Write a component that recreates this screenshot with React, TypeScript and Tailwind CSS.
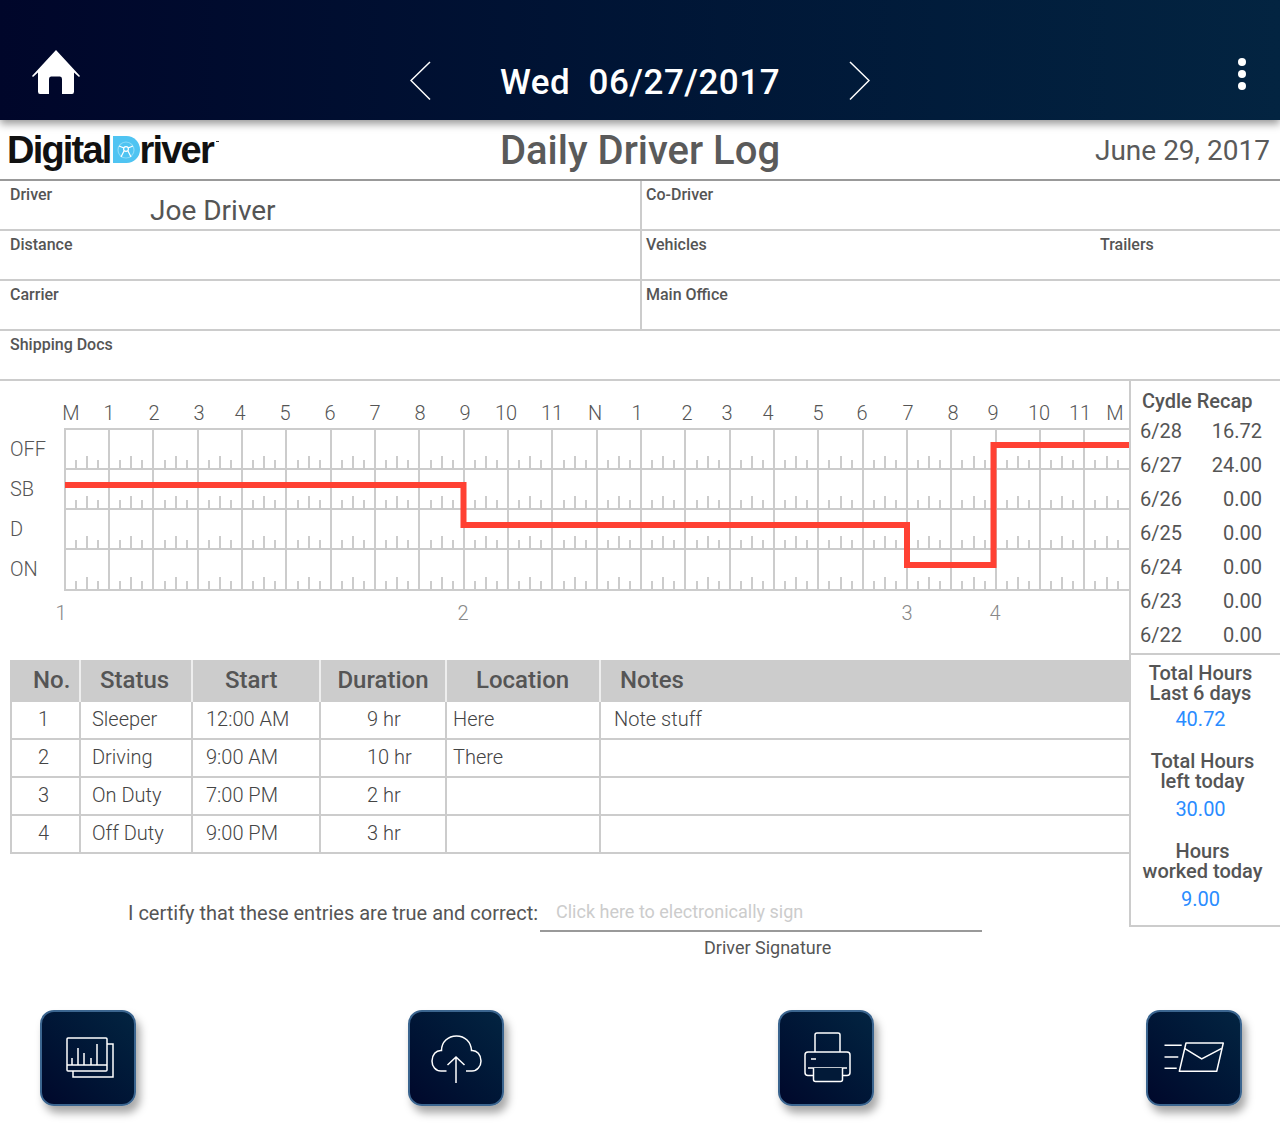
const hourLabels: [string, number][] = [
  ["M", 71], ["1", 109], ["2", 154], ["3", 199], ["4", 240], ["5", 285], ["6", 330], ["7", 375],
  ["8", 420], ["9", 465], ["10", 506], ["11", 552], ["N", 595], ["1", 637], ["2", 687], ["3", 727],
  ["4", 768], ["5", 818], ["6", 862], ["7", 908], ["8", 953], ["9", 993], ["10", 1039], ["11", 1080], ["M", 1115],
];
const statusLabels: [string, number][] = [["OFF", 76], ["SB", 116], ["D", 156], ["ON", 196]];
const rowBottoms = [89, 129, 169, 210];
const changeNumbers: [string, number][] = [["1", 61], ["2", 463], ["3", 907], ["4", 995]];

const recap = [
  ["6/28", "16.72"], ["6/27", "24.00"], ["6/26", "0.00"], ["6/25", "0.00"],
  ["6/24", "0.00"], ["6/23", "0.00"], ["6/22", "0.00"],
];

const logRows = [
  ["1", "Sleeper", "12:00 AM", "9 hr", "Here", "Note stuff"],
  ["2", "Driving", "9:00 AM", "10 hr", "There", ""],
  ["3", "On Duty", "7:00 PM", "2 hr", "", ""],
  ["4", "Off Duty", "9:00 PM", "3 hr", "", ""],
];

const headerCells = [
  ["No.", "w-[71px] pl-[23px]"],
  ["Status", "w-[112px] pl-[19px]"],
  ["Start", "w-[128px] pl-[32px]"],
  ["Duration", "w-[126px] justify-center"],
  ["Location", "w-[154px] pl-[29px]"],
  ["Notes", "flex-1 pl-[19px]"],
];

const bodyCells = [
  "w-[71px] justify-center pr-[4px] border-l-2",
  "w-[112px] pl-[11px]",
  "w-[128px] pl-[13px]",
  "w-[126px] pl-[46px]",
  "w-[154px] pl-[6px]",
  "flex-1 pl-[13px]",
];

const LogGraph = () => {
  const cell = 44.33;
  const left = 64.8;
  return (
    <svg width="1130" height="280" className="block -mt-px overflow-visible">
      {hourLabels.map(([label, x], i) => (
        <text key={i} x={x} y="40" textAnchor="middle" className="text-[20px] font-light fill-[#555]">{label}</text>
      ))}
      {statusLabels.map(([label, y]) => (
        <text key={label} x="10" y={y} className="text-[20px] font-light fill-[#555]">{label}</text>
      ))}
      {changeNumbers.map(([label, x]) => (
        <text key={label} x={x} y="240" textAnchor="middle" className="text-[20px] font-light fill-[#888]">{label}</text>
      ))}
      <line x1="64" y1="49" x2="1130" y2="49" stroke="#ccc" strokeWidth="2" />
      {rowBottoms.map((y) => (
        <line key={y} x1="64" y1={y} x2="1130" y2={y} stroke="#ccc" strokeWidth="2" />
      ))}
      {Array.from({ length: 24 }, (_, i) => {
        const x = Math.round(left + i * cell);
        return <line key={i} x1={x} y1="49" x2={x} y2="211" stroke="#ccc" strokeWidth="2" />;
      })}
      {rowBottoms.map((y) =>
        Array.from({ length: 24 }, (_, i) => {
          const x = left + i * cell;
          const q1 = Math.round(x + cell / 4);
          const q2 = Math.round(x + cell / 2);
          const q3 = Math.round(x + (cell * 3) / 4);
          return (
            <g key={i} stroke="#ccc" strokeWidth="2">
              <line x1={q1} y1={y - 9} x2={q1} y2={y} />
              <line x1={q2} y1={y - 13} x2={q2} y2={y} />
              <line x1={q3} y1={y - 9} x2={q3} y2={y} />
            </g>
          );
        })
      )}
      <path d="M65 105H463.500V145H907V185H993.500V65H1130" fill="none" stroke="#ff4133" strokeWidth="6" />
    </svg>
  );
};

const Logo = () => (
  <div className="flex items-start pl-[7px] pt-[10px] font-['Liberation_Sans',sans-serif] font-bold text-[38px] leading-[40px] tracking-[-1.8px] text-[#111]">
    <span>Digital</span>
    <div className="ml-[2px] mt-[6px] w-[27px] h-[27px] bg-[#4fc4f2] rounded-r-full flex items-center justify-center">
      <svg width="22" height="22" viewBox="0 0 22 22" fill="none" stroke="#fff" strokeWidth="1.2">
        <circle cx="11" cy="11" r="8" stroke="#8adaf7" />
        <circle cx="11" cy="10" r="2.4" />
        <path d="M4 7l5 2M18 7l-5 2M9 12l-3 6M13 12l3 6" />
      </svg>
    </div>
    <span>river</span>
    <span className="w-[3px] h-px bg-[#333] ml-[3px] mt-[11px]" />
  </div>
);

const ToolButton = ({ className, children }: { className: string; children: React.ReactNode }) => (
  <button className={`w-[96px] h-[96px] rounded-[14px] border-[2px] border-[#3b658f] bg-gradient-to-tr from-[#00082b] to-[#032441] flex items-center justify-center shadow-[4px_7px_8px_rgba(0,0,0,0.35)] ${className}`}>
    {children}
  </button>
);

const iconProps = {
  width: 60,
  height: 60,
  viewBox: "0 0 60 60",
  fill: "none",
  stroke: "#fff",
  strokeWidth: 1.5,
};

export default function App() {
  return (
    <div className="w-[1280px] h-[1124px] overflow-hidden bg-white font-['Roboto',sans-serif] text-[#555]">
      <header className="relative z-10 h-[120px] bg-gradient-to-r from-[#00062a] to-[#032441] shadow-[0_4px_8px_rgba(0,0,0,0.4)] flex items-center justify-center pt-[42px] text-white">
        <svg className="absolute left-[32px] top-[50px]" width="48" height="44" viewBox="0 0 48 44" fill="#fff">
          <path fillRule="evenodd" d="M24 0L48 26L47 27L42 22.500V41.500Q42 44 40 44H8Q6 44 6 41.500V22.500L1 27L0 26ZM17 44H30V29Q30 26.500 28 26.500H19Q17 26.500 17 29Z" />
        </svg>
        <svg width="21" height="40" viewBox="0 0 21 40" fill="none" stroke="#fff" strokeWidth="1.5">
          <path d="M20 1L1 19.500L20 38.500" />
        </svg>
        <div className="w-[418px] text-center text-[35px] leading-[42px] pt-[4px] font-medium tracking-[0.5px] whitespace-pre">Wed  06/27/2017</div>
        <svg width="21" height="40" viewBox="0 0 21 40" fill="none" stroke="#fff" strokeWidth="1.5">
          <path d="M1 1L20 19.500L1 38.500" />
        </svg>
        <div className="absolute left-[1238px] top-[58px] flex flex-col gap-[4px]">
          <span className="w-[8px] h-[8px] rounded-full bg-white" />
          <span className="w-[8px] h-[8px] rounded-full bg-white" />
          <span className="w-[8px] h-[8px] rounded-full bg-white" />
        </div>
      </header>

      <div className="grid grid-cols-[1fr_auto_1fr] h-[61px] border-b-2 border-[#999]">
        <Logo />
        <div className="text-[40px] leading-[60px] pt-px font-medium text-[#5a5a5a]">Daily Driver Log</div>
        <div className="text-right pr-[10px] pt-px text-[28px] leading-[60px] text-[#5a5a5a]">June 29, 2017</div>
      </div>

      <div className="text-[16px] leading-[18px] font-medium">
        <div className="flex h-[50px] border-b-2 border-[#ccc]">
          <div className="w-[642px] border-r-2 border-[#ccc] pl-[10px] pt-[5px] relative">
            Driver
            <div className="absolute left-[150px] top-[13px] text-[28px] leading-[34px] font-normal">Joe Driver</div>
          </div>
          <div className="flex-1 pl-[4px] pt-[5px]">Co-Driver</div>
        </div>
        <div className="flex h-[50px] border-b-2 border-[#ccc]">
          <div className="w-[642px] border-r-2 border-[#ccc] pl-[10px] pt-[5px]">Distance</div>
          <div className="w-[458px] pl-[4px] pt-[5px]">Vehicles</div>
          <div className="flex-1 pt-[5px]">Trailers</div>
        </div>
        <div className="flex h-[50px] border-b-2 border-[#ccc]">
          <div className="w-[642px] border-r-2 border-[#ccc] pl-[10px] pt-[5px]">Carrier</div>
          <div className="flex-1 pl-[4px] pt-[5px]">Main Office</div>
        </div>
        <div className="h-[50px] border-b-2 border-[#ccc] pl-[10px] pt-[5px]">Shipping Docs</div>
      </div>

      <div className="flex items-start">
        <div className="w-[1129px] shrink-0">
          <LogGraph />
          <div className="ml-[10px] text-[20px] text-[#444] font-light">
            <div className="flex h-[42px] bg-[#ccc] text-[24px] font-medium text-[#555]">
              {headerCells.map(([label, cls]) => (
                <div key={label} className={`flex items-center pb-[2px] border-r-2 border-[#eee] last:border-r-0 ${cls}`}>{label}</div>
              ))}
            </div>
            {logRows.map((row) => (
              <div key={row[0]} className="flex h-[38px] border-b-2 border-[#ccc]">
                {row.map((text, i) => (
                  <div key={i} className={`flex items-center pb-[2px] border-r-2 border-[#ccc] last:border-r-0 ${bodyCells[i]}`}>{text}</div>
                ))}
              </div>
            ))}
          </div>
          <div className="mt-[45px] flex items-start">
            <div className="ml-[128px] w-[412px] text-[20px] leading-[24px] pt-[2px]">I certify that these entries are true and correct:</div>
            <div className="w-[442px]">
              <div className="h-[33px] border-b-2 border-[#999] pl-[16px] text-[18px] leading-[26px] text-[#ccc]">Click here to electronically sign</div>
              <div className="pl-[164px] pt-[5px] text-[18px] leading-[22px]">Driver Signature</div>
            </div>
          </div>
        </div>

        <aside className="flex-1 h-[546px] border-l-2 border-b-2 border-[#ccc] text-[20px]">
          <div className="h-[274px] border-b-2 border-[#ccc] pl-[9px]">
            <div className="pt-[8px] pl-[2px] font-medium leading-[24px] h-[33px]">Cydle Recap</div>
            {recap.map(([day, hours]) => (
              <div key={day} className="flex justify-between h-[34px] leading-[34px] w-[122px] font-normal">
                <span>{day}</span>
                <span>{hours}</span>
              </div>
            ))}
          </div>
          <div className="text-center font-medium leading-[20px] pt-[8px] pr-[10px]">
            <div>Total Hours<br />Last 6 days</div>
            <div className="text-[#2a8cff] font-normal pt-[3px] leading-[26px] h-[48px]">40.72</div>
            <div className="pl-[4px]">Total Hours<br />left today</div>
            <div className="text-[#2a8cff] font-normal pt-[5px] leading-[26px] h-[50px]">30.00</div>
            <div className="pl-[4px]">Hours<br />worked today</div>
            <div className="text-[#2a8cff] font-normal pt-[5px] leading-[26px]">9.00</div>
          </div>
        </aside>
      </div>

      <div className="mt-[51px] pl-[40px] flex">
        <ToolButton className="">
          <svg {...iconProps}>
            <path d="M15 43V49H55V16H49" />
            <rect x="9" y="10" width="40" height="33" rx="1" />
            <path d="M9 37H49M14 37V30M20 37V20M26 37V25M33 37V30M39 37V16" />
          </svg>
        </ToolButton>
        <ToolButton className="ml-[272px]">
          <svg {...iconProps}>
            <path d="M20.500 43H15C9.500 43 6 38.500 6 33C6 27 10 22 15.500 22.500C15.500 14 22 8 30.500 8C39 8 45 14 45.500 22.500C51 22 55 27 55 33C55 38.500 51 43 46 43H40" />
            <path d="M30 55V29M21.500 37L30 29L38.500 37" />
          </svg>
        </ToolButton>
        <ToolButton className="ml-[274px]">
          <svg {...iconProps}>
            <path d="M19 24V7Q19 5 21 5H42Q44 5 44 7V24" />
            <rect x="9" y="24" width="45" height="23.500" rx="3" />
            <path d="M12 40H51" />
            <path d="M17.500 40V51.500Q17.500 53.500 19.500 53.500H44.500Q46.500 53.500 46.500 51.500V40" fill="#021a38" />
            <path d="M15 31H20" />
          </svg>
        </ToolButton>
        <ToolButton className="ml-[272px]">
          <svg {...iconProps}>
            <path d="M22 15H59.300L52.700 43.300H15.300Z" strokeLinejoin="round" />
            <path d="M20.500 20.300L37.700 31L57.700 20.300" />
            <path d="M0.500 17.300H17.700M0.500 29H14.300M0.500 40.300H12.700" />
          </svg>
        </ToolButton>
      </div>
    </div>
  );
}
